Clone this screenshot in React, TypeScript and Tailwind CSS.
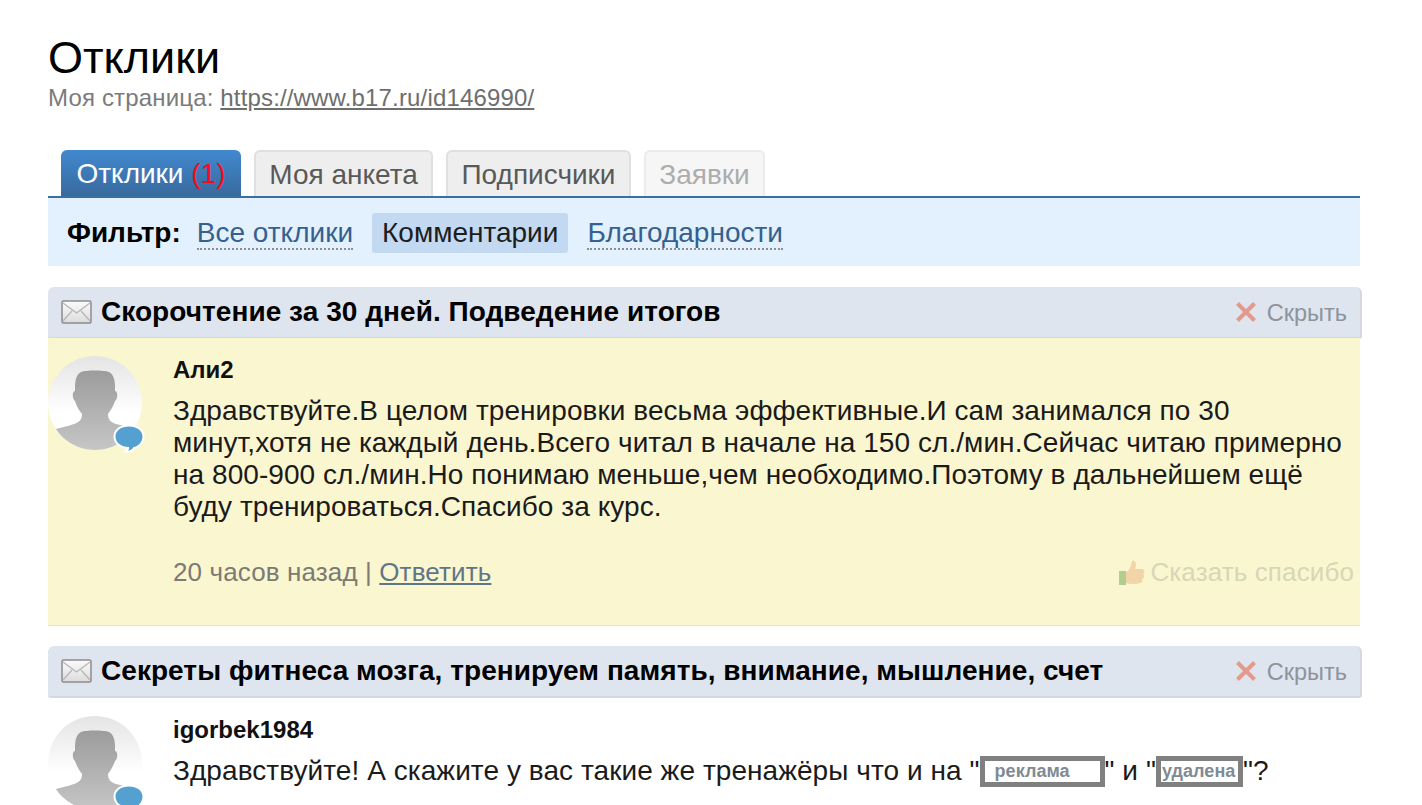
function Envelope() {
  return (
    <svg width="31" height="24" viewBox="0 0 31 24" className="shrink-0">
      <defs>
        <linearGradient id="env" x1="0" y1="0" x2="0" y2="1">
          <stop offset="0" stopColor="#fbfbfb" />
          <stop offset="1" stopColor="#dcdcdc" />
        </linearGradient>
      </defs>
      <rect x="1" y="1" width="29" height="22" rx="1.5" fill="url(#env)" stroke="#8c8c8c" strokeWidth="1.5" />
      <path d="M2 3l13.5 10L29 3M2 21l9-10M29 21l-9-10" fill="none" stroke="#b5b5b5" strokeWidth="1.2" />
    </svg>
  );
}

function Avatar() {
  return (
    <div className="relative h-[94px] w-[94px] shrink-0">
      <svg width="94" height="94" viewBox="0 0 94 94" className="block">
        <defs>
          <linearGradient id="avbg" x1="0" y1="0" x2="0" y2="1">
            <stop offset="0" stopColor="#e4e4e4" />
            <stop offset="0.6" stopColor="#ffffff" />
            <stop offset="1" stopColor="#ffffff" />
          </linearGradient>
          <linearGradient id="avfig" x1="0" y1="0" x2="0" y2="1">
            <stop offset="0" stopColor="#9c9c9c" />
            <stop offset="1" stopColor="#c6c6c6" />
          </linearGradient>
          <clipPath id="avclip">
            <circle cx="47" cy="47" r="47" />
          </clipPath>
        </defs>
        <circle cx="47" cy="47" r="47" fill="url(#avbg)" />
        <path
          clipPath="url(#avclip)"
          d="M33 16C38 14 56 14 61 16C65 18 67 23 67 31L67 35C70 35 70 43 67 45C65 51 62 55 60 58C60 63 62 66 68 68C76 70 85 72 90 76V94H4V75C8 72 18 71 26 68C32 66 34 63 34 58C31 54 29 51 27 45C24 43 24 35 27 35L27 31C27 23 29 18 33 16Z"
          fill="url(#avfig)"
        />
      </svg>
      <svg width="34" height="34" viewBox="0 0 34 34" className="absolute left-[64px] top-[66px]">
        <path
          d="M17 4.500c7.800 0 13.500 4.200 13.500 10S26 24.500 21.500 25c-1 2-3 3.500-5.500 3.500 1-1 1.500-2 1-3.500C9 25 3.500 20.500 3.500 14.500S9.200 4.500 17 4.500z"
          fill="#54a0d0"
          stroke="#fff"
          strokeWidth="4"
          paintOrder="stroke"
        />
      </svg>
    </div>
  );
}

function PostHeader({ title }: { title: string }) {
  return (
    <div className="flex h-[52px] w-[1314px] items-center rounded-t-[6px] rounded-b-[3px] border-r-2 border-b-2 border-[#d5d9df] bg-[#dee5ef] pl-[13px] pr-[13px]">
      <Envelope />
      <span className="ml-[9px] text-[28px] font-bold leading-none tracking-[0.05px] text-black">{title}</span>
      <span className="ml-auto flex items-center gap-[10px] text-[23.5px] text-[#8d949c]">
        <svg width="22" height="22" viewBox="0 0 22 22">
          <path d="M2.500 2.500l17 17M19.500 2.500l-17 17" stroke="#e39a8c" strokeWidth="4" />
        </svg>
        <span className="pt-[4px]">Скрыть</span>
      </span>
    </div>
  );
}

export default function App() {
  return (
    <div className="h-[805px] w-[1422px] overflow-hidden bg-white pl-[48px] pt-[31px] font-['Liberation_Sans',Arial,sans-serif]">
      <h1 className="text-[45px] leading-[54px] text-black">Отклики</h1>
      <p className="text-[24px] leading-[26px] tracking-[0.16px] text-[#7b7b7b]">
        Моя страница: <a className="text-[#6e6e6e] underline">https://www.b17.ru/id146990/</a>
      </p>

      <div className="mt-[39px] flex h-[48px] w-[1312px] items-start gap-[13px] border-b-2 border-[#3b6ea3] pl-[13px] text-[28px]">
        <div className="flex h-[46px] w-[180px] items-center justify-center rounded-t-[6px] bg-gradient-to-b from-[#4189cf] to-[#386a9e] pt-[2px] text-white">
          Отклики&nbsp;<span className="text-[#f40c1c]">(1)</span>
        </div>
        <div className="flex h-[46px] w-[179px] items-center justify-center rounded-t-[6px] border-2 border-b-0 border-[#dfe0e2] bg-[#eeeeee] pt-[2px] text-[#595959]">
          Моя анкета
        </div>
        <div className="flex h-[46px] w-[185px] items-center justify-center rounded-t-[6px] border-2 border-b-0 border-[#dfe0e2] bg-[#eeeeee] pt-[2px] text-[#595959]">
          Подписчики
        </div>
        <div className="flex h-[46px] w-[121px] items-center justify-center rounded-t-[6px] border-2 border-b-0 border-[#ececec] bg-[#f6f6f6] pt-[2px] text-[#adadad]">
          Заявки
        </div>
      </div>

      <div className="flex h-[68px] w-[1312px] items-center bg-[#e3f0fd] pl-[19px] pt-[2px] text-[28px]">
        <b className="text-[28px] text-black">Фильтр:</b>
        <span className="ml-[16px] border-b-2 border-dotted border-[#8a8f96] pt-[1px] leading-[31px] text-[#35608f]">Все отклики</span>
        <span className="ml-[19px] flex h-[40px] items-center rounded-[3px] bg-[#c3d9f2] px-[10px] text-[#1d1d1d]">Комментарии</span>
        <span className="ml-[19px] border-b-2 border-dotted border-[#8a8f96] pt-[1px] leading-[31px] text-[#35608f]">Благодарности</span>
      </div>

      <div className="mt-[21px]">
        <PostHeader title="Скорочтение за 30 дней. Подведение итогов" />
        <div className="-mt-[1px] flex h-[288px] w-[1312px] border-b border-[#dfe4e2] bg-[#faf6d0] pt-[18px]">
          <Avatar />
          <div className="ml-[31px] flex-1 pr-[6px]">
            <div className="pt-[1px] text-[24px] font-bold leading-[26px] text-[#111111]">Али2</div>
            <p className="mt-[12px] w-[1180px] text-[28px] leading-[32px] tracking-[0.06px] text-[#1a1a1a]">
              Здравствуйте.В целом тренировки весьма эффективные.И сам занимался по 30 минут,хотя не каждый день.Всего читал в начале на 150 сл./мин.Сейчас читаю примерно на 800-900 сл./мин.Но понимаю меньше,чем необходимо.Поэтому в дальнейшем ещё буду тренироваться.Спасибо за курс.
            </p>
            <div className="mt-[33px] flex items-center text-[26px] leading-[32px] tracking-[0.12px] text-[#7b7b73]">
              <span>
                20 часов назад | <a className="text-[#5f7688] underline">Ответить</a>
              </span>
              <span className="ml-auto flex items-center gap-[4px] text-[#d8d6b6]">
                <svg width="27" height="27" viewBox="0 0 27 27">
                  <rect x="0" y="12" width="7" height="14" fill="#b3cd8e" />
                  <path d="M7 13c4-2 5-6 6-11 4-1 5 3 3 8h7c3 0 3 4 1 5 2 2 1 4-1 5 1 2 0 4-2 4-3 1-9 2-14 0z" fill="#f1d5a8" />
                </svg>
                Сказать спасибо
              </span>
            </div>
          </div>
        </div>
      </div>

      <div className="mt-[20px]">
        <PostHeader title="Секреты фитнеса мозга, тренируем память, внимание, мышление, счет" />
        <div className="flex pt-[18px]">
          <Avatar />
          <div className="ml-[31px] flex-1">
            <div className="pt-[1px] text-[24px] font-bold leading-[26px] text-[#111111]">igorbek1984</div>
            <p className="mt-[12px] text-[28px] leading-[32px] tracking-[0.06px] text-[#1a1a1a]">
              Здравствуйте! А скажите у вас такие же тренажёры что и на "
              <span className="inline-flex h-[31px] w-[125px] items-center border-[5px] border-[#808080] bg-white pl-[10px] align-[3px] text-[18px] font-bold leading-none text-[#808a94]">реклама</span>
              " и "
              <span className="inline-flex h-[31px] w-[87px] items-center border-[5px] border-[#808080] bg-white pl-[1px] align-[3px] text-[18px] font-bold leading-none text-[#808a94]">удалена</span>
              "?
            </p>
          </div>
        </div>
      </div>
    </div>
  );
}
